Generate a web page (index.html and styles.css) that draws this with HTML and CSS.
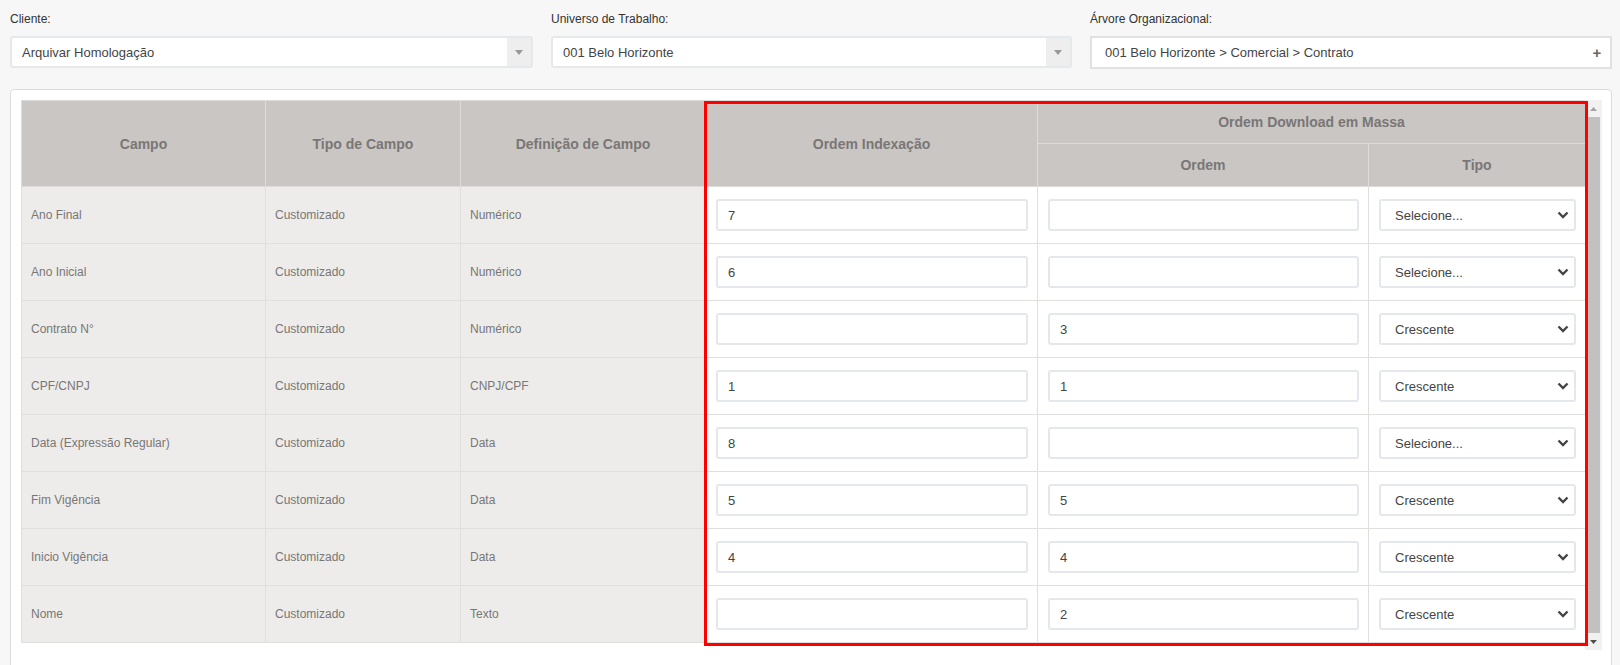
FILE: index.html
```html
<!DOCTYPE html>
<html lang="pt-BR">
<head>
<meta charset="utf-8">
<title>Configuração de Campos</title>
<link rel="stylesheet" href="styles.css">
</head>
<body>
<div class="filters">
  <div class="field">
    <label class="field-label">Cliente:</label>
    <div class="combo">
      <span class="combo-text">Arquivar Homologação</span>
      <span class="combo-arrow"><svg width="8" height="5" viewBox="0 0 8 5"><path d="M0 0H8L4 5Z" fill="#999"/></svg></span>
    </div>
  </div>
  <div class="field">
    <label class="field-label">Universo de Trabalho:</label>
    <div class="combo">
      <span class="combo-text">001 Belo Horizonte</span>
      <span class="combo-arrow"><svg width="8" height="5" viewBox="0 0 8 5"><path d="M0 0H8L4 5Z" fill="#999"/></svg></span>
    </div>
  </div>
  <div class="field">
    <label class="field-label">Árvore Organizacional:</label>
    <div class="tree-box">
      <span class="combo-text">001 Belo Horizonte &gt; Comercial &gt; Contrato</span>
      <span class="plus">+</span>
    </div>
  </div>
</div>

<div class="panel">
  <div class="scroll-area">
    <div class="table-wrap">
      <table class="grid">
        <colgroup>
          <col class="c1"><col class="c2"><col class="c3"><col class="c4"><col class="c5"><col class="c6">
        </colgroup>
        <thead>
          <tr class="hrow">
            <th rowspan="2">Campo</th>
            <th rowspan="2">Tipo de Campo</th>
            <th rowspan="2">Definição de Campo</th>
            <th rowspan="2">Ordem Indexação</th>
            <th colspan="2">Ordem Download em Massa</th>
          </tr>
          <tr class="hrow">
            <th>Ordem</th>
            <th>Tipo</th>
          </tr>
        </thead>
        <tbody>
          <tr>
            <td class="info">Ano Final</td><td class="info">Customizado</td><td class="info">Numérico</td>
            <td class="ctl"><input class="txt" value="7"></td>
            <td class="ctl"><input class="txt" value=""></td>
            <td class="ctl"><div class="sel-wrap"><select class="sel"><option selected>Selecione...</option><option>Crescente</option><option>Decrescente</option></select><svg class="chev" width="12" height="8" viewBox="0 0 12 8"><path d="M1.5 1.5L6 6L10.5 1.5" fill="none" stroke="#444" stroke-width="2.4"/></svg></div></td>
          </tr>
          <tr>
            <td class="info">Ano Inicial</td><td class="info">Customizado</td><td class="info">Numérico</td>
            <td class="ctl"><input class="txt" value="6"></td>
            <td class="ctl"><input class="txt" value=""></td>
            <td class="ctl"><div class="sel-wrap"><select class="sel"><option selected>Selecione...</option><option>Crescente</option><option>Decrescente</option></select><svg class="chev" width="12" height="8" viewBox="0 0 12 8"><path d="M1.5 1.5L6 6L10.5 1.5" fill="none" stroke="#444" stroke-width="2.4"/></svg></div></td>
          </tr>
          <tr>
            <td class="info">Contrato N°</td><td class="info">Customizado</td><td class="info">Numérico</td>
            <td class="ctl"><input class="txt" value=""></td>
            <td class="ctl"><input class="txt" value="3"></td>
            <td class="ctl"><div class="sel-wrap"><select class="sel"><option>Selecione...</option><option selected>Crescente</option><option>Decrescente</option></select><svg class="chev" width="12" height="8" viewBox="0 0 12 8"><path d="M1.5 1.5L6 6L10.5 1.5" fill="none" stroke="#444" stroke-width="2.4"/></svg></div></td>
          </tr>
          <tr>
            <td class="info">CPF/CNPJ</td><td class="info">Customizado</td><td class="info">CNPJ/CPF</td>
            <td class="ctl"><input class="txt" value="1"></td>
            <td class="ctl"><input class="txt" value="1"></td>
            <td class="ctl"><div class="sel-wrap"><select class="sel"><option>Selecione...</option><option selected>Crescente</option><option>Decrescente</option></select><svg class="chev" width="12" height="8" viewBox="0 0 12 8"><path d="M1.5 1.5L6 6L10.5 1.5" fill="none" stroke="#444" stroke-width="2.4"/></svg></div></td>
          </tr>
          <tr>
            <td class="info">Data (Expressão Regular)</td><td class="info">Customizado</td><td class="info">Data</td>
            <td class="ctl"><input class="txt" value="8"></td>
            <td class="ctl"><input class="txt" value=""></td>
            <td class="ctl"><div class="sel-wrap"><select class="sel"><option selected>Selecione...</option><option>Crescente</option><option>Decrescente</option></select><svg class="chev" width="12" height="8" viewBox="0 0 12 8"><path d="M1.5 1.5L6 6L10.5 1.5" fill="none" stroke="#444" stroke-width="2.4"/></svg></div></td>
          </tr>
          <tr>
            <td class="info">Fim Vigência</td><td class="info">Customizado</td><td class="info">Data</td>
            <td class="ctl"><input class="txt" value="5"></td>
            <td class="ctl"><input class="txt" value="5"></td>
            <td class="ctl"><div class="sel-wrap"><select class="sel"><option>Selecione...</option><option selected>Crescente</option><option>Decrescente</option></select><svg class="chev" width="12" height="8" viewBox="0 0 12 8"><path d="M1.5 1.5L6 6L10.5 1.5" fill="none" stroke="#444" stroke-width="2.4"/></svg></div></td>
          </tr>
          <tr>
            <td class="info">Inicio Vigência</td><td class="info">Customizado</td><td class="info">Data</td>
            <td class="ctl"><input class="txt" value="4"></td>
            <td class="ctl"><input class="txt" value="4"></td>
            <td class="ctl"><div class="sel-wrap"><select class="sel"><option>Selecione...</option><option selected>Crescente</option><option>Decrescente</option></select><svg class="chev" width="12" height="8" viewBox="0 0 12 8"><path d="M1.5 1.5L6 6L10.5 1.5" fill="none" stroke="#444" stroke-width="2.4"/></svg></div></td>
          </tr>
          <tr>
            <td class="info">Nome</td><td class="info">Customizado</td><td class="info">Texto</td>
            <td class="ctl"><input class="txt" value=""></td>
            <td class="ctl"><input class="txt" value="2"></td>
            <td class="ctl"><div class="sel-wrap"><select class="sel"><option>Selecione...</option><option selected>Crescente</option><option>Decrescente</option></select><svg class="chev" width="12" height="8" viewBox="0 0 12 8"><path d="M1.5 1.5L6 6L10.5 1.5" fill="none" stroke="#444" stroke-width="2.4"/></svg></div></td>
          </tr>
        </tbody>
      </table>
    </div>
    <div class="vscroll">
      <div class="vs-btn"><svg width="7" height="4" viewBox="0 0 7 4"><path d="M0 4L3.5 0L7 4Z" fill="#a3a3a3"/></svg></div>
      <div class="vs-track"><div class="vs-thumb"></div></div>
      <div class="vs-btn"><svg width="7" height="4" viewBox="0 0 7 4"><path d="M0 0H7L3.5 4Z" fill="#505050"/></svg></div>
    </div>
  </div>
  <div class="highlight"></div>
</div>
</body>
</html>
```

FILE: styles.css
```css
* { box-sizing: border-box; }

html, body {
  margin: 0;
  padding: 0;
}

body {
  background: #f7f7f7;
  font-family: "Liberation Sans", Arial, sans-serif;
  color: #333;
  width: 1620px;
  height: 665px;
  overflow: hidden;
}

.filters {
  display: grid;
  grid-template-columns: 523px 521px 522px;
  column-gap: 18px;
  padding: 12px 8px 0 10px;
}

.field-label {
  display: block;
  font-size: 12px;
  line-height: 14px;
  color: #333;
  margin-bottom: 10px;
}

.combo {
  display: flex;
  align-items: stretch;
  height: 32px;
  background: #fff;
  border: 2px solid #e6e9ec;
  border-radius: 3px;
}

.combo-text {
  flex: 1;
  display: flex;
  align-items: center;
  padding-left: 10px;
  font-size: 13px;
  color: #444;
  white-space: nowrap;
}

.combo-arrow {
  width: 24px;
  display: flex;
  align-items: center;
  justify-content: center;
  background: #eeeeee;
}

.tree-box {
  display: flex;
  align-items: center;
  height: 33px;
  background: #fff;
  border: 2px solid #e1e1e1;
}

.tree-box .combo-text {
  padding-left: 13px;
}

.plus {
  width: 24px;
  text-align: center;
  font-size: 15px;
  font-weight: bold;
  color: #666;
  padding-right: 2px;
}

.panel {
  position: relative;
  margin: 20px 8px 0 10px;
  background: #fff;
  border: 1px solid #dcdcdc;
  border-radius: 4px;
  padding: 10px 9px 20px 10px;
}

.scroll-area {
  display: flex;
  height: 550px;
}

.table-wrap {
  width: 1564px;
  overflow: hidden;
}

.grid {
  width: 1564px;
  table-layout: fixed;
  border-collapse: collapse;
}

.c1 { width: 244px; }
.c2 { width: 195px; }
.c3 { width: 245px; }
.c4 { width: 332px; }
.c5 { width: 331px; }
.c6 { width: 217px; }

.grid th {
  background: #c9c6c4;
  color: #7a7675;
  font-size: 14px;
  font-weight: bold;
  text-align: center;
  vertical-align: middle;
  height: 43px;
  padding: 0;
  border: 1px solid #dedbda;
}

.grid td {
  height: 57px;
  padding: 0 9px 0 10px;
  border: 1px solid #e0dfde;
  vertical-align: middle;
  font-size: 12px;
  color: #777;
}

.grid td.info {
  background: #eeecea;
  padding-left: 9px;
}

.grid td.ctl {
  background: #fff;
}

.txt {
  display: block;
  width: 100%;
  height: 32px;
  border: 2px solid #e4e7eb;
  border-radius: 3px;
  padding: 0 10px;
  font-family: "Liberation Sans", Arial, sans-serif;
  font-size: 13px;
  color: #444;
  background: #fff;
  outline: none;
}

.sel-wrap {
  position: relative;
}

.sel {
  display: block;
  width: 100%;
  height: 32px;
  border: 2px solid #e4e7eb;
  border-radius: 3px;
  padding: 0 30px 0 14px;
  font-family: "Liberation Sans", Arial, sans-serif;
  font-size: 13px;
  color: #444;
  background: #fff;
  -webkit-appearance: none;
  appearance: none;
  outline: none;
}

.chev {
  position: absolute;
  right: 7px;
  top: 12px;
  pointer-events: none;
}

.vscroll {
  width: 17px;
  display: flex;
  flex-direction: column;
  background: #f1f1f1;
}

.vs-btn {
  height: 17px;
  display: flex;
  align-items: center;
  justify-content: center;
}

.vs-track {
  flex: 1;
  padding: 0 2px;
}

.vs-thumb {
  height: 100%;
  background: #c1c1c1;
}

.highlight {
  position: absolute;
  left: 693px;
  top: 11px;
  width: 884px;
  height: 545px;
  border: 3px solid #ff0000;
  pointer-events: none;
}
```
